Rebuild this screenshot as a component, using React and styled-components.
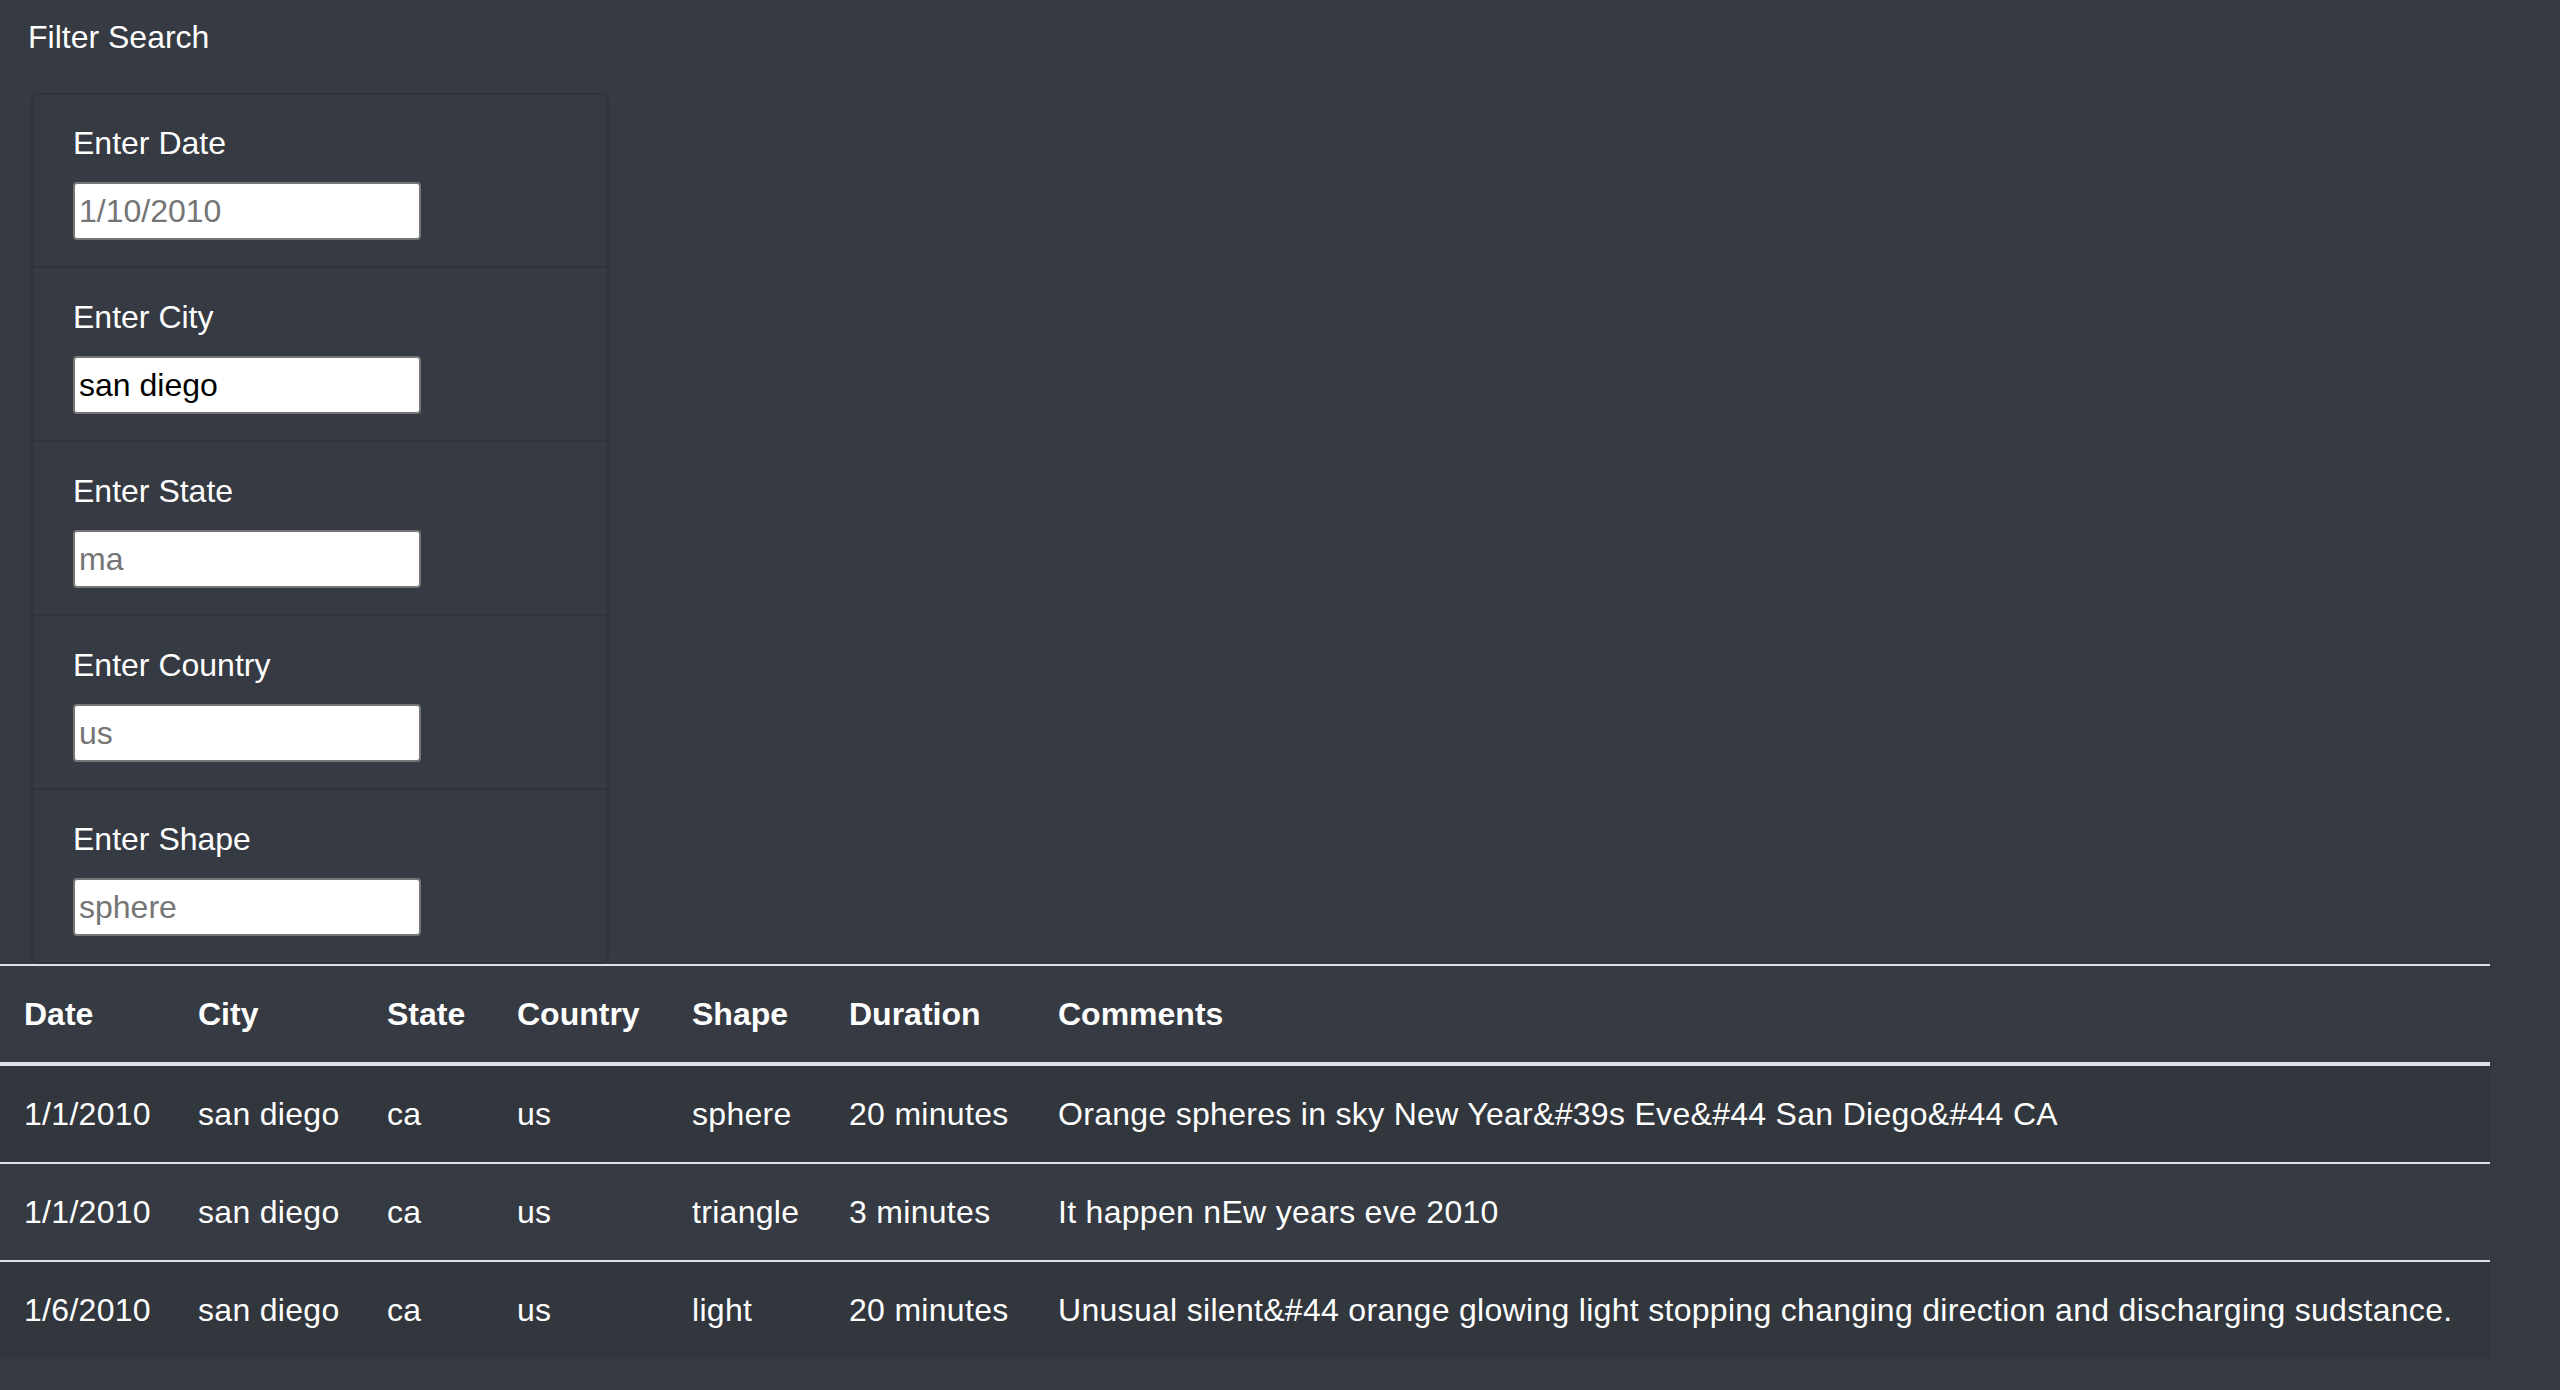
import React, { useState } from 'react'
import styled, { createGlobalStyle } from 'styled-components'

const GlobalStyle = createGlobalStyle`
  html, body {
    margin: 0;
    padding: 0;
    background: #363a42;
  }
  body {
    min-height: 100vh;
    font-family: "Liberation Sans", Arial, Helvetica, sans-serif;
    color: #fff;
  }
  * { box-sizing: border-box; }
`;

const Page = styled.div`
  min-height: 100vh;
  background: #363a42;
  padding-top: 13px;
`;

const Title = styled.h1`
  margin: 0 0 32px 28px;
  font-size: 32px;
  line-height: 48px;
  font-weight: 400;
  color: #fff;
`;

const FilterCard = styled.ul`
  list-style: none;
  margin: 0 0 0 31px;
  padding: 0;
  width: 578px;
  border: 2px solid #2f333a;
  border-radius: 8px;
`;

const FilterItem = styled.li`
  padding: 25px 40px 26px;
  border-top: 2px solid #2f333a;

  &:first-child {
    border-top: none;
    padding-top: 24px;
  }
`;

const Label = styled.label`
  display: block;
  font-size: 32px;
  line-height: 48px;
  margin-bottom: 15px;
  color: #fff;
`;

const Input = styled.input`
  display: block;
  width: 348px;
  height: 58px;
  padding: 0 4px;
  border: 2px solid #767676;
  border-radius: 4px;
  background: #fff;
  color: #000;
  font-family: "Liberation Sans", Arial, sans-serif;
  font-size: 32px;
  outline: none;

  &::placeholder {
    color: #757575;
  }
`;

const Table = styled.table`
  width: 2490px;
  table-layout: fixed;
  border-collapse: separate;
  border-spacing: 0;
  color: #fff;
  font-size: 32px;
  line-height: 48px;
`;

const HeadCell = styled.th`
  text-align: left;
  font-weight: 700;
  padding: 24px;
  border-top: 2px solid #dee2e6;
  border-bottom: 4px solid #dee2e6;
  white-space: nowrap;
`;

const Row = styled.tr`
  background: ${({ $odd }) => ($odd ? '#32363d' : 'transparent')};

  &:not(:first-child) td {
    border-top: 2px solid #dee2e6;
  }
`;

const Cell = styled.td`
  padding: 24px;
  white-space: nowrap;
  vertical-align: top;
  letter-spacing: 0.3px;
`;

const columns = [
  { key: 'date', label: 'Date', width: 174 },
  { key: 'city', label: 'City', width: 189 },
  { key: 'state', label: 'State', width: 130 },
  { key: 'country', label: 'Country', width: 175 },
  { key: 'shape', label: 'Shape', width: 157 },
  { key: 'duration', label: 'Duration', width: 209 },
  { key: 'comments', label: 'Comments', width: 1456 },
];

const sightings = [
  {
    date: '1/1/2010', city: 'san diego', state: 'ca', country: 'us', shape: 'sphere',
    duration: '20 minutes',
    comments: 'Orange spheres in sky New Year&#39s Eve&#44 San Diego&#44 CA',
  },
  {
    date: '1/1/2010', city: 'san diego', state: 'ca', country: 'us', shape: 'triangle',
    duration: '3 minutes',
    comments: 'It happen nEw years eve 2010',
  },
  {
    date: '1/6/2010', city: 'san diego', state: 'ca', country: 'us', shape: 'light',
    duration: '20 minutes',
    comments: 'Unusual silent&#44 orange glowing light stopping changing direction and discharging sudstance.',
  },
];

const filterFields = [
  { id: 'datetime', label: 'Enter Date', placeholder: '1/10/2010' },
  { id: 'city', label: 'Enter City', placeholder: 'roswell' },
  { id: 'state', label: 'Enter State', placeholder: 'ma' },
  { id: 'country', label: 'Enter Country', placeholder: 'us' },
  { id: 'shape', label: 'Enter Shape', placeholder: 'sphere' },
];

const App = () => {
  const [filters, setFilters] = useState({ city: 'san diego' });

  const handleChange = (id) => (e) => {
    setFilters({ ...filters, [id]: e.target.value })
  };

  return (
    <Page>
      <GlobalStyle />
      <Title>Filter Search</Title>
      <FilterCard>
        {filterFields.map((field) => (
          <FilterItem key={field.id}>
            <Label htmlFor={field.id}>{field.label}</Label>
            <Input
              id={field.id}
              type='text'
              placeholder={field.placeholder}
              value={filters[field.id] || ''}
              onChange={handleChange(field.id)}
            />
          </FilterItem>
        ))}
      </FilterCard>
      <Table>
        <colgroup>
          {columns.map((col) => (
            <col key={col.key} style={{ width: col.width }} />
          ))}
        </colgroup>
        <thead>
          <tr>
            {columns.map((col) => (
              <HeadCell key={col.key}>{col.label}</HeadCell>
            ))}
          </tr>
        </thead>
        <tbody>
          {sightings.map((s, i) => (
            <Row key={i} $odd={i % 2 === 0}>
              {columns.map((col) => (
                <Cell key={col.key}>{s[col.key]}</Cell>
              ))}
            </Row>
          ))}
        </tbody>
      </Table>
    </Page>
  )
}

export default App
